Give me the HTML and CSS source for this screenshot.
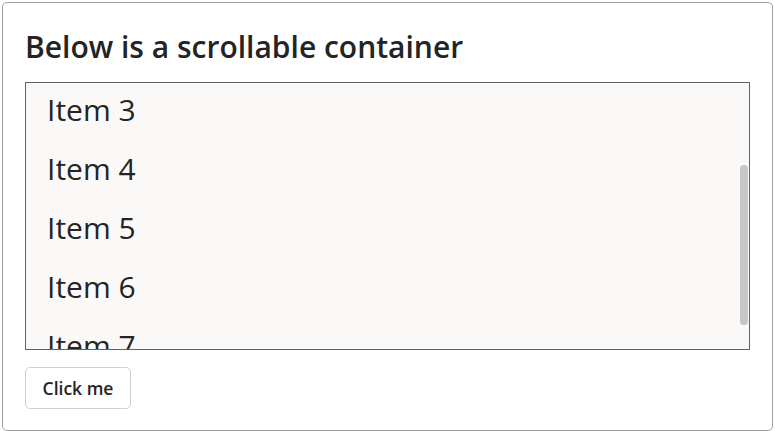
FILE: index.html
```html
<!DOCTYPE html>
<html lang="en">
<head>
<meta charset="utf-8">
<title>Scrollable container</title>
<link rel="stylesheet" href="styles.css">
</head>
<body>
<div class="card">
  <h2 class="title">Below is a scrollable container</h2>
  <div class="scroll-wrap">
    <div class="scroller" id="scroller">
      <ul class="list">
        <li class="item">Item 1</li>
        <li class="item">Item 2</li>
        <li class="item">Item 3</li>
        <li class="item">Item 4</li>
        <li class="item">Item 5</li>
        <li class="item">Item 6</li>
        <li class="item">Item 7</li>
      </ul>
    </div>
    <div class="thumb"></div>
  </div>
  <div class="actions">
    <button class="btn" type="button">Click me</button>
  </div>
</div>
<script src="script.js"></script>
</body>
</html>
```

FILE: styles.css
```css
html, body {
  margin: 0;
  padding: 0;
  background: #ffffff;
}
body {
  padding: 2px 2px 0 2px;
  font-family: "Open Sans", "Noto Sans", sans-serif;
  color: #242424;
}
.card {
  box-sizing: border-box;
  width: 771px;
  height: 429px;
  border: 1px solid #a19f9d;
  border-radius: 5px;
  padding: 20px 22px 0 22px;
  display: flex;
  flex-direction: column;
}
.title {
  margin: 0;
  font-size: 30px;
  font-weight: 600;
  line-height: 48px;
  height: 59px;
  letter-spacing: 0;
}
.scroll-wrap {
  position: relative;
  height: 268px;
}
.scroller {
  box-sizing: border-box;
  height: 268px;
  border: 1px solid #616161;
  background: #faf9f8;
  overflow-y: auto;
  scrollbar-width: none;
}
.scroller::-webkit-scrollbar {
  display: none;
}
.thumb {
  position: absolute;
  right: 2px;
  top: 83px;
  width: 8px;
  height: 160px;
  border-radius: 4px;
  background: #c8c6c4;
}
.list {
  list-style: none;
  margin: 0;
  padding: 14px 0;
}
.item {
  height: 59px;
  line-height: 59px;
  padding-left: 21px;
  font-size: 30px;
  font-weight: 400;
}
.actions {
  padding-top: 17px;
  display: flex;
}
.btn {
  box-sizing: border-box;
  height: 42px;
  min-width: 106px;
  padding: 0 15px;
  border: 1px solid #d1d1d1;
  border-radius: 5px;
  background: #ffffff;
  color: #242424;
  font-family: "Open Sans", "Noto Sans", sans-serif;
  font-size: 17.5px;
  font-weight: 600;
}
```

FILE: script.js
```js
document.getElementById('scroller').scrollTop = 135;
```
